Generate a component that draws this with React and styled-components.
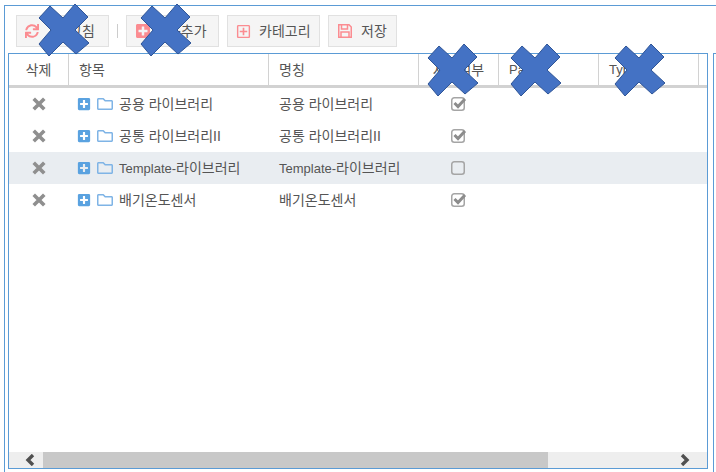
import React from "react";
import styled, { createGlobalStyle } from "styled-components";
import { FaPlusSquare, FaRegFolder, FaSync, FaRegPlusSquare } from "react-icons/fa";

const GlobalStyle = createGlobalStyle`
  html, body {
    margin: 0;
    padding: 0;
    background: #ffffff;
    overflow: hidden;
  }
  body {
    font-family: "Liberation Sans", "Noto Sans CJK KR", sans-serif;
    font-size: 14px;
    color: #555555;
  }
`;

const Page = styled.div`
  position: relative;
  width: 716px;
  height: 472px;
  overflow: hidden;
  padding: 5px 0 0 4px;
  box-sizing: border-box;
`;

const Frame = styled.div`
  border-top: 1px solid #5b9bd5;
  border-left: 1px solid #5b9bd5;
  height: 467px;
  box-sizing: border-box;
  padding-left: 3px;
`;

const Toolbar = styled.div`
  display: flex;
  align-items: flex-start;
  height: 47px;
  padding: 9px 0 0 8px;
  box-sizing: border-box;
`;

const ToolButton = styled.div`
  display: flex;
  align-items: center;
  width: ${(p) => p.$width}px;
  height: 32px;
  margin-right: 8px;
  padding-left: 8px;
  box-sizing: border-box;
  gap: ${(p) => p.$iconGap || 8}px;
  background: #f5f5f5;
  border: 1px solid #e1e1e1;
  color: #555555;
  white-space: nowrap;
  svg {
    color: #fb8c91;
    font-size: ${(p) => p.$iconSize || 15}px;
    flex: none;
  }
`;

const Divider = styled.div`
  width: 1px;
  height: 14px;
  background: #cccccc;
  margin: 9px 8px 0 0;
`;

const Split = styled.div`
  display: flex;
  gap: 5px;
`;

const Panel = styled.div`
  flex: none;
  width: 700px;
  height: 416px;
  box-sizing: border-box;
  border: 1px solid #5b9bd5;
  display: flex;
  flex-direction: column;
`;

const SidePanel = styled.div`
  flex: none;
  width: 20px;
  height: 420px;
  box-sizing: border-box;
  border-left: 1px solid #5b9bd5;
  border-top: 1px solid #5b9bd5;
`;

const HeaderRow = styled.div`
  display: grid;
  grid-template-columns: 60px 200px 150px 80px 100px 100px 1fr;
  height: 34px;
  box-sizing: border-box;
  border-bottom: 3px solid #d2d2d2;
`;

const HeaderCell = styled.div`
  display: flex;
  align-items: center;
  justify-content: ${(p) => (p.$center ? "center" : "flex-start")};
  padding-left: ${(p) => (p.$center ? 0 : 10)}px;
  border-right: 1px solid #d2d2d2;
  &:last-child {
    border-right: none;
  }
`;

const Body = styled.div`
  flex: 1;
`;

const Row = styled.div`
  display: grid;
  grid-template-columns: 60px 200px 150px 80px 100px 100px 1fr;
  height: 32px;
  background: ${(p) => (p.$selected ? "#e9edf1" : "transparent")};
`;

const Cell = styled.div`
  display: flex;
  align-items: center;
  justify-content: ${(p) => (p.$center ? "center" : "flex-start")};
  padding-left: ${(p) => (p.$center ? 0 : p.$tree ? 8 : 10)}px;
  white-space: nowrap;
`;

const Label = styled.span`
  margin-top: -2px;
`;

const Latin = styled.span`
  font-size: 13px;
`;

const ExpandIcon = styled(FaPlusSquare)`
  color: #5aa2e0;
  font-size: 14px;
  margin-right: 6px;
  flex: none;
`;

const FolderIcon = styled(FaRegFolder)`
  color: #7fb4e6;
  font-size: 16px;
  margin-right: 6px;
  flex: none;
`;

const ScrollBar = styled.div`
  display: flex;
  align-items: center;
  height: 16px;
  background: #eeeeee;
  color: #505050;
`;

const ScrollArrow = styled.div`
  flex: none;
  width: ${(p) => p.$width}px;
  padding-left: ${(p) => p.$inset || 0}px;
  box-sizing: border-box;
  display: flex;
  justify-content: center;
`;

const ScrollTrack = styled.div`
  flex: 1;
  height: 100%;
`;

const ScrollThumb = styled.div`
  width: 505px;
  height: 100%;
  background: #c8c8c8;
`;

const Mark = styled.svg`
  position: absolute;
  left: ${(p) => p.$x}px;
  top: ${(p) => p.$y}px;
  width: 52px;
  height: 54px;
`;

const rows = [
  { id: 1, name: <>공용 라이브러리</>, used: true },
  { id: 2, name: <>공통 라이브러리II</>, used: true },
  { id: 3, name: <><Latin>Template-</Latin>라이브러리</>, used: false, selected: true },
  { id: 4, name: <>배기온도센서</>, used: true },
];

const marks = [
  [38, 3],
  [140, 3],
  [427, 43],
  [510, 43],
  [614, 43],
];

const Chevron = ({ left }) => (
  <svg width="10" height="12" viewBox="0 0 10 12">
    <path
      d={left ? "M8 1 L3 6 L8 11" : "M2 1 L7 6 L2 11"}
      fill="none"
      stroke="currentColor"
      strokeWidth="3.4"
    />
  </svg>
);

const DeleteMark = () => (
  <svg width="14" height="14" viewBox="0 0 14 14">
    <path d="M3 3 L11 11 M11 3 L3 11" stroke="#8f8f8f" strokeWidth="3.6" strokeLinecap="square" />
  </svg>
);

const CheckBox = ({ checked }) => (
  <svg width="16" height="16" viewBox="0 0 16 16">
    <rect x="0.75" y="1.75" width="12.5" height="12.5" rx="2.5" fill="none" stroke="#a5a5a5" strokeWidth="1.5" />
    {checked && <path d="M3.5 7 L7 10.5 L14 3" fill="none" stroke="#8c8c8c" strokeWidth="3" />}
  </svg>
);

const SaveIcon = () => (
  <svg width="16" height="16" viewBox="0 0 16 16" fill="none" stroke="currentColor" strokeWidth="1.5">
    <path d="M1.75 1.75 H12 L14.25 4 V14.25 H1.75 Z" />
    <path d="M4.5 2 V6 H10.5 V2" />
    <path d="M4 14 V9 H12 V14" />
  </svg>
);

export default function App() {
  return (
    <Page>
      <GlobalStyle />
      <Frame>
        <Toolbar>
          <ToolButton $width={93} $iconSize={14} $iconGap={30}>
            <FaSync />
            <Label>고침</Label>
          </ToolButton>
          <Divider />
          <ToolButton $width={93} $iconSize={16} $iconGap={4}>
            <FaPlusSquare />
            <Label>항목추가</Label>
          </ToolButton>
          <ToolButton $width={93}>
            <FaRegPlusSquare />
            <Label>카테고리</Label>
          </ToolButton>
          <ToolButton $width={69}>
            <SaveIcon />
            <Label>저장</Label>
          </ToolButton>
        </Toolbar>
        <Split>
          <Panel>
            <HeaderRow>
              <HeaderCell $center><Label>삭제</Label></HeaderCell>
              <HeaderCell><Label>항목</Label></HeaderCell>
              <HeaderCell><Label>명칭</Label></HeaderCell>
              <HeaderCell $center><Label>사용여부</Label></HeaderCell>
              <HeaderCell><Label><Latin>Path</Latin></Label></HeaderCell>
              <HeaderCell><Label><Latin>Type</Latin></Label></HeaderCell>
              <HeaderCell />
            </HeaderRow>
            <Body>
              {rows.map((row) => (
                <Row key={row.id} $selected={row.selected}>
                  <Cell $center>
                    <DeleteMark />
                  </Cell>
                  <Cell $tree>
                    <ExpandIcon />
                    <FolderIcon />
                    <Label>{row.name}</Label>
                  </Cell>
                  <Cell>
                    <Label>{row.name}</Label>
                  </Cell>
                  <Cell $center>
                    <CheckBox checked={row.used} />
                  </Cell>
                  <Cell />
                  <Cell />
                  <Cell />
                </Row>
              ))}
            </Body>
            <ScrollBar>
              <ScrollArrow $width={34} $inset={8}>
                <Chevron left />
              </ScrollArrow>
              <ScrollThumb />
              <ScrollTrack />
              <ScrollArrow $width={44}>
                <Chevron />
              </ScrollArrow>
            </ScrollBar>
          </Panel>
          <SidePanel />
        </Split>
      </Frame>
      {marks.map(([x, y]) => (
        <Mark key={x} $x={x} $y={y} viewBox="0 0 52 54">
          <path
            d="M12 3 L25 15 L37 1 L50 14 L37 27 L51 40 L38 51 L25 39 L11 53 L1 41 L13 27 L1 15 Z"
            fill="#4472c4"
            stroke="#2f5597"
            strokeWidth="1"
          />
        </Mark>
      ))}
    </Page>
  );
}
